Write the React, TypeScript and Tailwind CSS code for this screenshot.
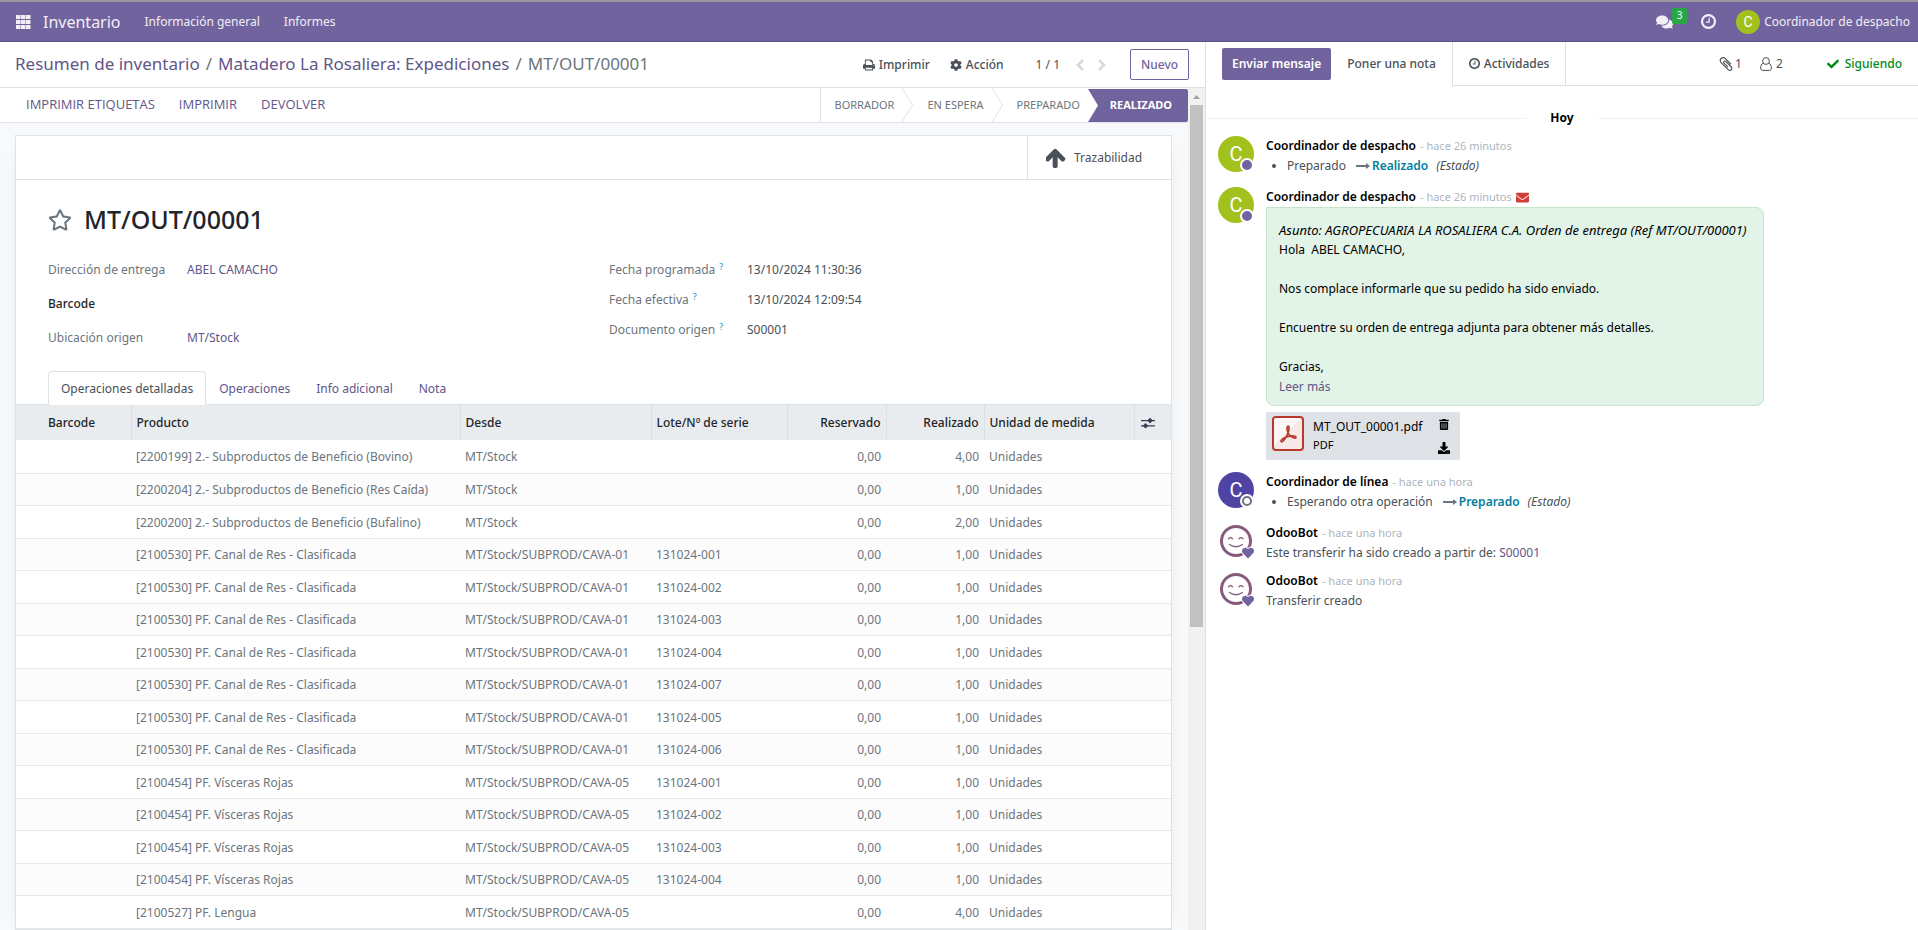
import { ReactNode, useState } from "react";
import {
  FaCheck,
  FaCog,
  FaComments,
  FaDownload,
  FaEnvelope,
  FaHeart,
  FaRegStar,
  FaTrashAlt,
} from "react-icons/fa";

type MoveLine = {
  product: string;
  from: string;
  lot: string;
  reserved: string;
  done: string;
};

const SUB = "MT/Stock/SUBPROD/";

const moveLines: MoveLine[] = [
  { product: "[2200199] 2.- Subproductos de Beneficio (Bovino)", from: "MT/Stock", lot: "", reserved: "0,00", done: "4,00" },
  { product: "[2200204] 2.- Subproductos de Beneficio (Res Caída)", from: "MT/Stock", lot: "", reserved: "0,00", done: "1,00" },
  { product: "[2200200] 2.- Subproductos de Beneficio (Bufalino)", from: "MT/Stock", lot: "", reserved: "0,00", done: "2,00" },
  ...["001", "002", "003", "004", "007", "005", "006"].map((n) => ({
    product: "[2100530] PF. Canal de Res - Clasificada",
    from: `${SUB}CAVA-01`,
    lot: `131024-${n}`,
    reserved: "0,00",
    done: "1,00",
  })),
  ...["001", "002", "003", "004"].map((n) => ({
    product: "[2100454] PF. Vísceras Rojas",
    from: `${SUB}CAVA-05`,
    lot: `131024-${n}`,
    reserved: "0,00",
    done: "1,00",
  })),
  { product: "[2100527] PF. Lengua", from: `${SUB}CAVA-05`, lot: "", reserved: "0,00", done: "4,00" },
];

const tabs = ["Operaciones detalladas", "Operaciones", "Info adicional", "Nota"];

function AppsIcon() {
  return (
    <svg viewBox="0 0 15 14" className="h-[14px] w-[15px]" fill="currentColor">
      {[0, 5, 10].map((y) =>
        [0, 5, 10].map((x) => <rect key={`${x}-${y}`} x={x} y={y} width="4.500" height="4" />),
      )}
    </svg>
  );
}

function ClockIcon({ className }: { className: string }) {
  return (
    <svg viewBox="0 128 1536 1536" className={className} fill="currentColor">
      <path d="M896 544v448q0 14-9 23t-23 9h-320q-14 0-23-9t-9-23v-64q0-14 9-23t23-9h224v-352q0-14 9-23t23-9h64q14 0 23 9t9 23zm416 352q0-148-73-273t-198-198-273-73-273 73-198 198-73 273 73 273 198 198 273 73 273-73 198-198 73-273zm224 0q0 209-103 385.5t-279.5 279.5-385.5 103-385.5-103-279.5-279.5-103-385.5 103-385.5 279.5-279.5 385.5-103 385.5 103 279.5 279.5 103 385.5z" />
    </svg>
  );
}

function PaperclipIcon() {
  return (
    <svg viewBox="128 128 1536 1536" className="h-3.5 w-3.5" fill="currentColor">
      <path d="M1596 1385q0 117-79 196t-196 79q-135 0-235-100l-777-776q-113-115-113-271 0-159 110-270t269-111q158 0 273 113l605 606q10 10 10 22 0 16-30.5 46.5t-46.5 30.5q-13 0-23-10l-606-607q-79-77-181-77-106 0-179 75t-73 181q0 105 76 181l776 777q63 63 145 63 64 0 106-42t42-106q0-82-63-145l-581-581q-26-24-60-24-29 0-48 19t-19 48q0 32 25 59l410 410q10 10 10 22 0 16-31 47t-47 31q-12 0-22-10l-410-410q-63-61-63-149 0-82 57-139t139-57q88 0 149 63l581 581q100 98 100 235z" />
    </svg>
  );
}

function PrintIcon() {
  return (
    <svg viewBox="64 128 1664 1536" className="h-3 w-3" fill="currentColor">
      <path d="M448 1536h896v-256h-896v256zm0-640h896v-384h-160q-40 0-68-28t-28-68v-160h-640v640zm1152 64q0-26-19-45t-45-19-45 19-19 45 19 45 45 19 45-19 19-45zm128 0v416q0 13-9.5 22.5t-22.5 9.5h-224v160q0 40-28 68t-68 28h-960q-40 0-68-28t-28-68v-160h-224q-13 0-22.5-9.5t-9.5-22.5v-416q0-79 56.5-135.5t135.5-56.5h64v-544q0-40 28-68t68-28h672q40 0 88 20t76 48l152 152q28 28 48 76t20 88v256h64q79 0 135.5 56.5t56.5 135.5z" />
    </svg>
  );
}

function ArrowUpIcon() {
  return (
    <svg viewBox="128 128 1536 1536" className="h-5 w-5" fill="currentColor">
      <path d="M1611 971q0 51-37 90l-75 75q-38 38-91 38-54 0-90-38l-294-293v704q0 52-37.5 84.5t-90.5 32.5h-128q-53 0-90.5-32.5t-37.5-84.5v-704l-294 293q-36 38-90 38t-90-38l-75-75q-38-38-38-90 0-53 38-91l651-651q35-37 90-37 54 0 91 37l651 651q37 39 37 91z" />
    </svg>
  );
}

function Chevron({ path }: { path: string }) {
  return (
    <svg viewBox="0 0 8 12" className="h-3 w-2" fill="none" stroke="currentColor" strokeWidth="2.5">
      <path d={path} />
    </svg>
  );
}

function UserIcon() {
  return (
    <svg viewBox="0 0 12 14" className="h-[14px] w-3" fill="none" stroke="currentColor" strokeWidth="1">
      <circle cx="6" cy="4" r="3.4" />
      <path d="M3.2 6.2C1.4 7 .6 8.8.6 11c0 1.5.9 2.4 2.1 2.4h6.6c1.2 0 2.1-.9 2.1-2.4 0-2.2-.8-4-2.6-4.8" />
    </svg>
  );
}

function LongArrow() {
  return (
    <svg viewBox="0 0 14 8" className="mr-[2px] mb-0.5 ml-2.5 inline-block h-2 w-3.5" fill="#6c757d">
      <path d="M0 3.1h10V1l4 3-4 3V4.900H0z" />
    </svg>
  );
}

function OptionsIcon() {
  return (
    <svg viewBox="0 0 14 12" className="h-3 w-3.5" fill="#374151">
      <path d="M0 3h14v1.200H0zM0 8.200h14v1.200H0z" />
      <path d="M9 .8 12 3.600 9 6.400 6.200 3.600zM4.500 6 7.300 8.800 4.500 11.600 1.700 8.800z" />
    </svg>
  );
}

function PdfIcon() {
  return (
    <svg viewBox="0 0 32 35" className="mt-1 h-[35px] w-8 self-start">
      <rect x="1" y="1" width="30" height="33" rx="3" fill="#f7e9e8" stroke="#b83a2e" strokeWidth="2" />
      <path d="M2 4a2 2 0 0 1 2-2h25L2 29z" fill="#fff" opacity=".65" />
      <path
        d="M15.5 10.5c2-1.500 2 3 .2 7-1.700 4-4.500 8.500-6.200 8.300-1.800-.8 1.500-4 6-5.200 4.500-1.200 8.800-.7 8.500.8-.5 1.600-4.200.3-6.500-2.400-2-2.400-3.300-6.500-2-8.500z"
        fill="none"
        stroke="#b83a2e"
        strokeWidth="1.700"
      />
    </svg>
  );
}

function BotAvatar() {
  return (
    <svg viewBox="0 0 36 36" className="h-9 w-9" fill="none">
      <circle cx="18" cy="18" r="14.500" stroke="#875a7b" strokeWidth="3" />
      <path d="M10.5 15.8q2-2.200 4 0M21 15.8q2-2.200 4 0M11.5 21.5q6.500 4.500 13 0" stroke="#875a7b" strokeWidth="1.300" strokeLinecap="round" />
    </svg>
  );
}

type Presence = "online" | "offline" | "bot";

function Avatar({ color, presence }: { color?: string; presence: Presence }) {
  return (
    <div className="relative h-9 w-9 shrink-0">
      {presence === "bot" ? (
        <BotAvatar />
      ) : (
        <span className={`flex h-9 w-9 items-center justify-center rounded-full font-['Roboto',sans-serif] text-xl text-white ${color}`}>
          C
        </span>
      )}
      {presence === "online" && (
        <span className="absolute right-0 bottom-0 h-3.5 w-3.5 rounded-full border-2 border-white bg-[#71639e]" />
      )}
      {presence === "offline" && (
        <span className="absolute right-0 bottom-0 flex h-3.5 w-3.5 items-center justify-center rounded-full bg-white">
          <span className="h-2.5 w-2.5 rounded-full border-2 border-[#6c757d]" />
        </span>
      )}
      {presence === "bot" && (
        <FaHeart className="absolute right-0 bottom-0 h-3 w-3 overflow-visible stroke-white text-[#71639e] [paint-order:stroke] [stroke-width:80]" />
      )}
    </div>
  );
}

function ChatMessage({
  author,
  time,
  color,
  presence,
  email,
  children,
}: {
  author: string;
  time: string;
  color?: string;
  presence: Presence;
  email?: boolean;
  children: ReactNode;
}) {
  return (
    <article className="flex gap-3">
      <Avatar color={color} presence={presence} />
      <div className="min-w-0">
        <header className="flex h-5 items-center gap-1">
          <strong className="font-semibold text-black">{author}</strong>
          <span className="text-[11px] text-[#adb5bd]">- {time}</span>
          {email && <FaEnvelope className="h-[13px] w-[13px] text-[#d23f3a]" />}
        </header>
        {children}
      </div>
    </article>
  );
}

function StateChange({ before, after }: { before: string; after: string }) {
  return (
    <ul className="list-disc pl-[21px] leading-[19px]">
      <li>
        {before}
        <LongArrow />
        <span className="font-semibold text-[#017e9c]">{after}</span>
        <em className="ml-2">(Estado)</em>
      </li>
    </ul>
  );
}

function Field({ label, help, children }: { label: string; help?: boolean; children: ReactNode }) {
  return (
    <>
      <dt className="text-[#6c757d]">
        {label}
        {help && <sup className="ml-1 text-[9px] text-[#0e9ab8]">?</sup>}
      </dt>
      <dd>{children}</dd>
    </>
  );
}

function Navbar() {
  return (
    <nav className="flex h-[42px] shrink-0 items-center border-t-2 border-b border-t-[#9a979f] border-b-[#5a4f7f] bg-[#71639e] pr-2 pl-4 text-white/90">
      <button type="button" aria-label="Aplicaciones">
        <AppsIcon />
      </button>
      <a href="#inventario" className="ml-3 text-base">Inventario</a>
      <a href="#informacion" className="ml-6">Información general</a>
      <a href="#informes" className="ml-6">Informes</a>
      <div className="ml-auto flex h-full items-center">
        <button type="button" aria-label="Conversaciones" className="relative">
          <FaComments className="h-4 w-[17px]" />
          <span className="absolute -top-1.5 left-4 flex h-4 w-[15px] items-center justify-center rounded-xs bg-[#28a745] text-[10px] text-white">
            3
          </span>
        </button>
        <button type="button" aria-label="Actividades" className="ml-7">
          <ClockIcon className="h-[15px] w-[15px]" />
        </button>
        <button type="button" className="ml-5 flex items-center gap-1">
          <span className="flex h-6 w-6 items-center justify-center rounded-full bg-[#a2c11c] font-['Roboto',sans-serif] text-sm text-white">
            C
          </span>
          Coordinador de despacho
        </button>
      </div>
    </nav>
  );
}

function StatusStep({ label }: { label: string }) {
  return (
    <li className="flex items-center">
      <span className="pr-2 pl-3.5">{label}</span>
      <svg viewBox="0 0 11 34" className="h-[34px] w-[11px]" fill="none" stroke="#dee2e6">
        <path d="M0 0 10.5 17 0 34" />
      </svg>
    </li>
  );
}

function StatusBar() {
  return (
    <div className="flex h-[35px] items-center justify-between border-b border-[#dee2e6] bg-white pl-[26px]">
      <div className="flex gap-6 font-['Open_Sans',sans-serif] text-[13px] font-medium text-[#625689]">
        <button type="button">IMPRIMIR ETIQUETAS</button>
        <button type="button">IMPRIMIR</button>
        <button type="button">DEVOLVER</button>
      </div>
      <ol className="flex h-[34px] items-center border-l border-[#dee2e6] text-[11px] text-[#6c757d]">
        <StatusStep label="BORRADOR" />
        <StatusStep label="EN ESPERA" />
        <li className="pr-2 pl-3.5">PREPARADO</li>
        <li className="flex items-center font-bold text-white">
          <svg viewBox="0 0 12 33" className="h-[33px] w-3" fill="#71639e">
            <path d="M0 0H12V33H0L10 16.5z" />
          </svg>
          <span className="flex h-[33px] items-center rounded-r-xs bg-[#71639e] pr-4 pl-2.5">REALIZADO</span>
        </li>
      </ol>
    </div>
  );
}

function MoveTable() {
  const head = "border-r border-[#dcdfe3] px-[5px] text-left font-medium";
  return (
    <table className="w-full table-fixed border-collapse whitespace-nowrap">
      <colgroup>
        <col className="w-[115px]" />
        <col />
        <col className="w-[191px]" />
        <col className="w-[136px]" />
        <col className="w-[99px]" />
        <col className="w-[98px]" />
        <col className="w-[150px]" />
        <col className="w-[37px]" />
      </colgroup>
      <thead className="bg-[#e9ecef] text-[#212529]">
        <tr className="h-[35px]">
          <th className="border-r border-[#dcdfe3] pl-8 text-left font-medium">Barcode</th>
          <th className={head}>Producto</th>
          <th className={head}>Desde</th>
          <th className={head}>Lote/Nº de serie</th>
          <th className="border-r border-[#dcdfe3] px-[5px] text-right font-medium">Reservado</th>
          <th className="border-r border-[#dcdfe3] px-[5px] text-right font-medium">Realizado</th>
          <th className={head}>Unidad de medida</th>
          <th className="pl-1.5">
            <button type="button" aria-label="Columnas" className="flex">
              <OptionsIcon />
            </button>
          </th>
        </tr>
      </thead>
      <tbody className="text-[#6c757d]">
        {moveLines.map((line, index) => (
          <tr key={index} className="border-b border-[#e5e7ea] odd:h-[33px] even:h-8 even:bg-[#fcfcfc]">
            <td />
            <td className="px-[5px] pt-0.5">{line.product}</td>
            <td className="px-[5px] pt-0.5">{line.from}</td>
            <td className="px-[5px] pt-0.5">{line.lot}</td>
            <td className="px-[5px] pt-0.5 text-right">{line.reserved}</td>
            <td className="px-[5px] pt-0.5 text-right">{line.done}</td>
            <td className="px-[5px] pt-0.5">Unidades</td>
            <td />
          </tr>
        ))}
      </tbody>
    </table>
  );
}

function Sheet() {
  const [active, setActive] = useState(tabs[0]);

  return (
    <section className="mt-3 mr-4 mb-4 ml-[15px] border border-[#dee2e6] bg-white shadow-[0_5px_20px_-15px_rgba(0,0,0,0.4)]">
      <div className="flex h-11 justify-end border-b border-[#dee2e6]">
        <button type="button" className="flex w-36 items-center gap-2 border-l border-[#dee2e6] pl-[18px]">
          <ArrowUpIcon />
          Trazabilidad
        </button>
      </div>

      <div className="flex h-20 items-center gap-3 px-8">
        <button type="button" aria-label="Prioridad" className="text-[#6c757d]">
          <FaRegStar className="h-6 w-6" />
        </button>
        <h1 className="text-[25px] font-medium text-[#212529]">MT/OUT/00001</h1>
      </div>

      <div className="grid h-[111px] grid-cols-[561fr_530fr] px-8 leading-5">
        <dl className="grid grid-cols-[139px_1fr] content-start gap-y-3.5">
          <Field label="Dirección de entrega">
            <a href="#cliente" className="text-[#625689]">ABEL CAMACHO</a>
          </Field>
          <dt className="font-medium text-[#212529]">Barcode</dt>
          <dd />
          <Field label="Ubicación origen">
            <a href="#ubicacion" className="text-[#625689]">MT/Stock</a>
          </Field>
        </dl>
        <dl className="grid grid-cols-[138px_1fr] content-start gap-y-2.5">
          <Field label="Fecha programada" help>13/10/2024 11:30:36</Field>
          <Field label="Fecha efectiva" help>13/10/2024 12:09:54</Field>
          <Field label="Documento origen" help>S00001</Field>
        </dl>
      </div>

      <div role="tablist" className="flex h-[34px] border-b border-[#dee2e6] px-8">
        {tabs.map((tab) => (
          <button
            key={tab}
            type="button"
            role="tab"
            aria-selected={tab === active}
            onClick={() => setActive(tab)}
            className={`h-[34px] rounded-t-sm border border-b-0 px-3 ${
              tab === active ? "border-[#dee2e6] bg-white text-[#495057]" : "border-transparent text-[#625689]"
            }`}
          >
            {tab}
          </button>
        ))}
      </div>
      <MoveTable />
    </section>
  );
}

function Scrollbar() {
  return (
    <div className="flex w-[17px] shrink-0 flex-col items-center bg-[#f1f1f1]">
      <svg viewBox="0 0 17 17" className="h-[17px] w-[17px]" fill="#a3a3a3">
        <path d="M5 11 8.500 7 12 11z" />
      </svg>
      <div className="h-[62%] w-[13px] bg-[#c1c1c1]" />
    </div>
  );
}

function FormView() {
  return (
    <main className="flex min-h-0 flex-col border-r border-[#dee2e6] bg-white">
      <div className="flex h-[46px] shrink-0 items-center border-b border-[#dee2e6] pr-4 pl-[15px]">
        <div className="flex gap-1.5 text-[17px] text-[#6c757d]">
          <a href="#resumen" className="text-[#625689]">Resumen de inventario</a>
          <span>/</span>
          <a href="#expediciones" className="text-[#625689]">Matadero La Rosaliera: Expediciones</a>
          <span>/</span>
          <span>MT/OUT/00001</span>
        </div>
        <div className="ml-auto flex items-center">
          <button type="button" className="flex items-center gap-1 font-medium">
            <PrintIcon />
            Imprimir
          </button>
          <button type="button" className="ml-5 flex items-center gap-1 font-medium">
            <FaCog className="h-3 w-3" />
            Acción
          </button>
          <span className="ml-8">1 / 1</span>
          <button type="button" aria-label="Anterior" className="ml-4 text-[#d5d8dd]">
            <Chevron path="M7 1 2 6l5 5" />
          </button>
          <button type="button" aria-label="Siguiente" className="ml-3.5 text-[#d5d8dd]">
            <Chevron path="M1 1l5 5-5 5" />
          </button>
          <button type="button" className="ml-6 h-[31px] w-[59px] rounded-xs border border-[#71639e] font-medium text-[#71639e]">
            Nuevo
          </button>
        </div>
      </div>
      <div className="flex min-h-0 flex-1">
        <div className="min-w-0 flex-1 overflow-hidden bg-[#f8f9fa]">
          <StatusBar />
          <Sheet />
        </div>
        <Scrollbar />
      </div>
    </main>
  );
}

function Chatter() {
  return (
    <aside className="min-w-0 bg-white">
      <div className="flex h-11 items-stretch">
        <div className="flex items-center gap-4 pr-4 pl-4">
          <button type="button" className="h-8 rounded-xs bg-[#71639e] px-2.5 font-semibold text-white">
            Enviar mensaje
          </button>
          <button type="button" className="font-medium">Poner una nota</button>
        </div>
        <button type="button" className="flex items-center gap-1 border-x border-b border-[#dee2e6] px-4 font-medium">
          <ClockIcon className="h-[11px] w-[11px]" />
          Actividades
        </button>
        <div className="flex flex-1 items-center justify-end border-b border-[#dee2e6] pr-4">
          <button type="button" aria-label="Adjuntos" className="flex items-center gap-0.5">
            <PaperclipIcon />1
          </button>
          <button type="button" aria-label="Seguidores" className="ml-[18px] flex items-center gap-1">
            <UserIcon />2
          </button>
          <button type="button" className="ml-11 flex items-center gap-1.5 font-medium text-[#008818]">
            <FaCheck className="h-3 w-3" />
            Siguiendo
          </button>
        </div>
      </div>

      <div className="mt-6 flex items-center gap-6 font-bold text-black">
        <hr className="flex-1 border-[#f0f1f3]" />
        Hoy
        <hr className="flex-1 border-[#f0f1f3]" />
      </div>

      <div className="mt-2.5 flex flex-col pr-8 pl-3">
        <ChatMessage author="Coordinador de despacho" time="hace 26 minutos" color="bg-[#a2c11c]" presence="online">
          <StateChange before="Preparado" after="Realizado" />
        </ChatMessage>
        <div className="h-3" />
        <ChatMessage author="Coordinador de despacho" time="hace 26 minutos" color="bg-[#a2c11c]" presence="online" email>
          <div className="rounded-lg rounded-tl-none border border-[#c3e6cb] bg-[#e2f3e7] px-3 pt-3 pb-2 leading-5 text-black">
            <p className="pr-1 text-[13px] leading-5"><em>Asunto: AGROPECUARIA LA ROSALIERA C.A. Orden de entrega (Ref MT/OUT/00001)</em></p>
            <p>Hola&nbsp; ABEL CAMACHO,</p>
            <p className="mt-[19px]">Nos complace informarle que su pedido ha sido enviado.</p>
            <p className="mt-[19px]">Encuentre su orden de entrega adjunta para obtener más detalles.</p>
            <p className="mt-[19px]">Gracias,</p>
            <a href="#mas" className="text-[#625689]">Leer más</a>
          </div>
          <div className="mt-1.5 flex h-12 w-[194px] items-center rounded-xs bg-[#dee2e6] px-1.5 text-black">
            <PdfIcon />
            <div className="ml-[9px] flex-1 leading-[18px]">
              <p>MT_OUT_00001.pdf</p>
              <p className="text-[11px]">PDF</p>
            </div>
            <div className="flex flex-col gap-3 pr-1">
              <button type="button" aria-label="Eliminar"><FaTrashAlt className="h-[11px] w-3" /></button>
              <button type="button" aria-label="Descargar"><FaDownload className="h-3 w-3" /></button>
            </div>
          </div>
        </ChatMessage>
        <div className="h-3" />
        <ChatMessage author="Coordinador de línea" time="hace una hora" color="bg-[#4f43a3]" presence="offline">
          <StateChange before="Esperando otra operación" after="Preparado" />
        </ChatMessage>
        <div className="h-3" />
        <ChatMessage author="OdooBot" time="hace una hora" presence="bot">
          <p className="leading-5">
            Este transferir ha sido creado a partir de: <a href="#s00001" className="text-[#625689]">S00001</a>
          </p>
        </ChatMessage>
        <div className="h-2" />
        <ChatMessage author="OdooBot" time="hace una hora" presence="bot">
          <p className="leading-5">Transferir creado</p>
        </ChatMessage>
      </div>
    </aside>
  );
}

export default function App() {
  return (
    <div className="flex h-screen flex-col overflow-hidden font-['Noto_Sans',sans-serif] text-xs text-[#495057]">
      <Navbar />
      <div className="grid min-h-0 flex-1 grid-cols-[minmax(0,1206fr)_minmax(0,712fr)]">
        <FormView />
        <Chatter />
      </div>
    </div>
  );
}
